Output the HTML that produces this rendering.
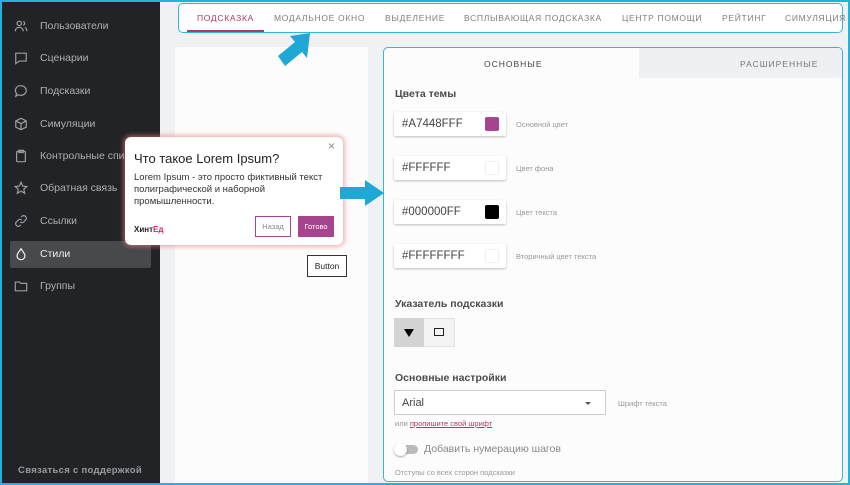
<!DOCTYPE html>
<html><head><meta charset="utf-8"><style>
*{box-sizing:border-box;margin:0;padding:0}
body{width:850px;height:485px;overflow:hidden;font-family:"Liberation Sans",sans-serif;background:#f0f1f3;position:relative}
.frame{position:absolute;inset:0;border:2px solid #1fb3dd;z-index:50;pointer-events:none}
.side{position:absolute;left:0;top:0;width:160px;height:485px;background:#212327}
.it{position:absolute;left:14px;height:20px;color:#aeb0b3;font-size:10.5px;display:flex;align-items:center;white-space:nowrap}
.it svg{width:14px;height:14px;margin-right:12px;stroke:#9a9ca0;fill:none;stroke-width:1.4}
.act{position:absolute;left:10px;top:241px;width:141px;height:27px;background:#48494c;border-radius:2px}
.abs{position:absolute}
.nav{position:absolute;left:178px;top:3px;width:665px;height:30px;background:#fff;border:1.5px solid #33b5de;border-radius:5px;font-size:8.5px;letter-spacing:0.7px;color:#7c7e82}
.nav span{position:absolute;top:9px;white-space:nowrap}
.panelL{position:absolute;left:175px;top:47px;width:193px;height:438px;background:#fcfcfc}
.panelR{position:absolute;left:383px;top:47px;width:460px;height:435px;background:#fcfcfc;border:1.5px solid #33b5de;border-radius:5px;overflow:hidden}
.tab2{position:absolute;left:255px;top:0;width:205px;height:30px;background:#eff0f2}
.h{position:absolute;left:11px;font-size:10.5px;font-weight:bold;color:#4a4b4e}
.cf{position:absolute;left:10px;width:112px;height:24px;background:#fff;box-shadow:0 1px 2px rgba(0,0,0,.25);font-size:11.5px;color:#444;padding:6px 8px;border-radius:2px}
.sw{position:absolute;right:7px;top:5px;width:14px;height:14px;border-radius:2px;border:1px solid #eee}
.lab{position:absolute;left:132px;font-size:7.5px;color:#9a9a9a}
</style></head><body>
<div class="side">
<div class="act"></div>
<div class="it" style="top:16px"><svg viewBox="0 0 16 16"><circle cx="6" cy="5" r="2.5"/><path d="M1.5 14c0-3 2-4.5 4.5-4.5s4.5 1.5 4.5 4.5M10.5 2.8a2.3 2.3 0 010 4.4M12.5 9.8c1.5.6 2.2 2 2.2 4"/></svg>Пользователи</div>
<div class="it" style="top:48px"><svg viewBox="0 0 16 16"><path d="M2 2.5h12v9H6l-4 3z"/></svg>Сценарии</div>
<div class="it" style="top:81px"><svg viewBox="0 0 16 16"><path d="M8 2a6 5.5 0 110 11c-1 0-2-.2-3-.6L2 14l1-3A5.5 5.5 0 018 2z"/></svg>Подсказки</div>
<div class="it" style="top:114px"><svg viewBox="0 0 16 16"><path d="M8 1.5l6 3v7l-6 3-6-3v-7zM2 4.5l6 3 6-3M8 7.5v7"/></svg>Симуляции</div>
<div class="it" style="top:146px"><svg viewBox="0 0 16 16"><rect x="3" y="2.5" width="10" height="12" rx="1"/><rect x="5.5" y="1.5" width="5" height="2.5"/></svg>Контрольные списки</div>
<div class="it" style="top:178px"><svg viewBox="0 0 16 16"><path d="M8 1.5l2 4.3 4.6.5-3.4 3.1 1 4.6L8 11.6 3.8 14l1-4.6L1.4 6.3 6 5.8z"/></svg>Обратная связь</div>
<div class="it" style="top:211px"><svg viewBox="0 0 16 16"><path d="M7 9a3 3 0 004.2 0l2.3-2.3a3 3 0 00-4.2-4.2L8.3 3.5M9 7a3 3 0 00-4.2 0L2.5 9.3a3 3 0 004.2 4.2l1-1"/></svg>Ссылки</div>
<div class="it" style="top:244px;color:#f0f0f0"><svg viewBox="0 0 16 16" style="stroke:#f0f0f0"><path d="M8 2C6 5 3.5 7.5 3.5 10a4.5 4.5 0 009 0C12.5 7.5 10 5 8 2z"/></svg>Стили</div>
<div class="it" style="top:276px"><svg viewBox="0 0 16 16"><path d="M1.5 3.5h5l1.5 1.5h6.5v8.5h-13z"/></svg>Группы</div>
<div class="abs" style="left:0;width:160px;top:465px;text-align:center;font-size:9.5px;font-weight:bold;color:#9a9ca0;letter-spacing:.3px">Связаться с поддержкой</div>
</div>

<div class="nav">
<span style="left:18px;color:#b23a63">ПОДСКАЗКА</span>
<div class="abs" style="left:8px;top:26px;width:77px;height:2px;background:#b23a63"></div>
<span style="left:95px">МОДАЛЬНОЕ ОКНО</span>
<span style="left:206px">ВЫДЕЛЕНИЕ</span>
<span style="left:285px">ВСПЛЫВАЮЩАЯ ПОДСКАЗКА</span>
<span style="left:443px">ЦЕНТР ПОМОЩИ</span>
<span style="left:543px">РЕЙТИНГ</span>
<span style="left:606px">СИМУЛЯЦИЯ</span>
</div>

<div class="panelL"></div>
<div class="panelR">
<div class="tab2"></div>
<div class="abs" style="left:100px;top:11px;font-size:8.5px;letter-spacing:1px;color:#444">ОСНОВНЫЕ</div>
<div class="abs" style="left:356px;top:11px;font-size:8.5px;letter-spacing:1px;color:#777">РАСШИРЕННЫЕ</div>
<div class="h" style="top:40px">Цвета темы</div>
<div class="cf" style="top:64px">#A7448FFF<div class="sw" style="background:#a7448f;border-color:#a7448f"></div></div>
<div class="lab" style="top:72px">Основной цвет</div>
<div class="cf" style="top:108px">#FFFFFF<div class="sw"></div></div>
<div class="lab" style="top:116px">Цвет фона</div>
<div class="cf" style="top:152px">#000000FF<div class="sw" style="background:#000;border-color:#000"></div></div>
<div class="lab" style="top:160px">Цвет текста</div>
<div class="cf" style="top:196px">#FFFFFFFF<div class="sw"></div></div>
<div class="lab" style="top:204px">Вторичный цвет текста</div>
<div class="h" style="top:250px">Указатель подсказки</div>
<div class="abs" style="left:10px;top:270px;width:61px;height:29px;border:1px solid #e4e4e4;background:#f3f3f3"></div>
<div class="abs" style="left:10px;top:270px;width:30px;height:29px;background:#d3d3d3"></div>
<div class="abs" style="left:20px;top:281px;width:0;height:0;border-left:5px solid transparent;border-right:5px solid transparent;border-top:8px solid #000"></div>
<div class="abs" style="left:50px;top:280px;width:10px;height:8px;border:1.3px solid #222"></div>
<div class="h" style="top:324px">Основные настройки</div>
<div class="abs" style="left:10px;top:342px;width:212px;height:25px;border:1px solid #ccc;background:#fff;font-size:11px;color:#444;padding:6px 7px">Arial<div class="abs" style="right:14px;top:11px;border-left:3px solid transparent;border-right:3px solid transparent;border-top:3px solid #555"></div></div>
<div class="lab" style="left:234px;top:351px">Шрифт текста</div>
<div class="abs" style="left:11px;top:371px;font-size:7.5px;color:#999">или <span style="color:#b23a63;text-decoration:underline">пропишите свой шрифт</span></div>
<div class="abs" style="left:12px;top:397px;width:22px;height:9px;border-radius:5px;background:#bbb"></div>
<div class="abs" style="left:10px;top:395px;width:13px;height:13px;border-radius:50%;background:#fff;box-shadow:0 1px 2px rgba(0,0,0,.35)"></div>
<div class="abs" style="left:40px;top:395px;font-size:10.5px;color:#888">Добавить нумерацию шагов</div>
<div class="lab" style="left:11px;top:420px">Отступы со всех сторон подсказки</div>
</div>

<div class="abs" style="left:125px;top:137px;width:218px;height:108px;background:#fff;border-radius:6px;box-shadow:0 0 4px 2px rgba(240,120,120,.55)">
<div class="abs" style="right:8px;top:2px;font-size:12px;color:#888">×</div>
<div class="abs" style="left:9px;top:14px;font-size:13px;color:#222">Что такое Lorem Ipsum?</div>
<div class="abs" style="left:9px;top:35px;font-size:9.5px;color:#333;line-height:12px;width:205px">Lorem Ipsum - это просто фиктивный текст полиграфической и наборной промышленности.</div>
<div class="abs" style="left:9px;top:88px;font-size:8px;font-weight:bold;color:#222">Хинт<span style="color:#e01b5b">Ед</span></div>
<div class="abs" style="left:130px;top:79px;width:36px;height:21px;border:1px solid #a7448f;font-size:7.5px;color:#888;text-align:center;line-height:19px">Назад</div>
<div class="abs" style="left:173px;top:79px;width:36px;height:21px;background:#a7448f;font-size:7.5px;color:#fff;text-align:center;line-height:21px">Готово</div>
</div>
<div class="abs" style="left:307px;top:255px;width:40px;height:22px;border:1px solid #333;background:#fff;font-size:8.5px;color:#222;text-align:center;line-height:20px">Button</div>

<svg class="abs" style="left:270px;top:30px" width="45" height="45" viewBox="0 0 45 45"><path d="M40 3L20 6l5 6-17 14 7 10 17-14 5 6z" fill="#1ea8d6"/></svg>
<svg class="abs" style="left:337px;top:178px" width="50" height="30" viewBox="0 0 50 30"><path d="M3 9h25V2l19 13-19 13v-7H3z" fill="#1ea8d6"/></svg>
<div class="frame"></div>
</body></html>
